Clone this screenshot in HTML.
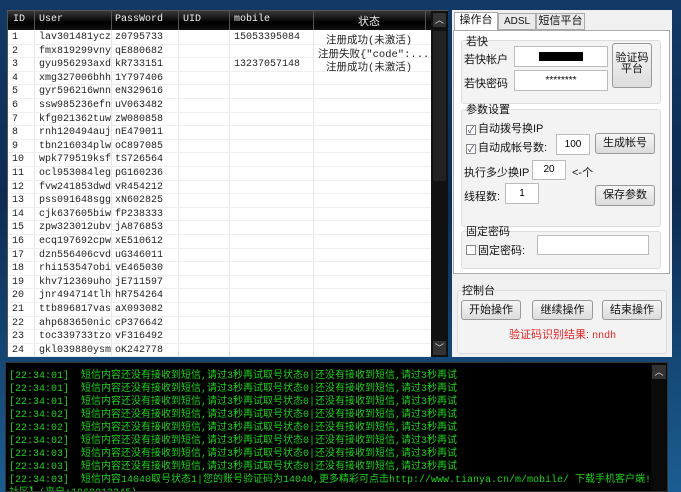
<!DOCTYPE html>
<html><head><meta charset="utf-8"><style>
*{margin:0;padding:0;box-sizing:border-box}
body{width:681px;height:492px;overflow:hidden;background:linear-gradient(180deg,#123a66,#0d2c52 40%,#1b5d92);font-family:"Liberation Sans","Noto Sans CJK SC",sans-serif;font-size:11px;position:relative}
.a{position:absolute}
#tbl{left:7px;top:10px;width:441px;height:347px;background:#fff;border:1px solid #555}
.hd{left:0;top:0;width:423px;height:19px;background:linear-gradient(#3a3a3a,#000 60%,#111);color:#eee;font-family:"Liberation Mono","Noto Sans CJK SC",monospace;font-size:10px}
.hd div{position:absolute;top:3px}
.vs{position:absolute;top:0;width:1px;height:19px;background:#555}
.row{position:absolute;left:0;width:423px;height:13.6px;border-bottom:1px solid #eee;font-family:"Liberation Mono","Noto Sans CJK SC",monospace;font-size:10px;color:#222}
.row span{position:absolute;top:1px;white-space:nowrap}
.cl{position:absolute;top:19px;width:1px;height:327px;background:#e6e6e6}
#sb{left:423px;top:0;width:17px;height:346px;background:#111}
#rp{left:452px;top:10px;width:220px;height:347px;background:#f0f0f0}
.tab{position:absolute;top:3px;height:17px;border:1px solid #aaa;background:#eaeaea;font-size:11px;text-align:center;line-height:15px;color:#111}
.grp{position:absolute;border:1px solid #ddd;border-radius:3px;background:#f3f3f3}
.lbl{position:absolute;font-size:11px;color:#111;white-space:nowrap}
.inp{position:absolute;background:#fff;border:1px solid #bbb;font-size:10px;text-align:center}
.btn{position:absolute;border:1px solid #999;border-radius:3px;background:linear-gradient(#f6f6f6,#dcdcdc);font-size:11px;text-align:center;color:#111}
.cb{display:inline-block;width:10px;height:10px;border:1px solid #888;background:#fff;vertical-align:-1px;margin-right:2px;font-size:9px;line-height:8px;color:#335;text-align:center}
#log{left:5px;top:362px;width:663px;height:130px;background:#000;border:1px solid #333;overflow:hidden}
.ln{position:absolute;left:3px;color:#1fd21f;font-size:10px;white-space:nowrap;font-family:"Liberation Mono","Noto Sans CJK SC",monospace}
</style></head><body>
<div id="tbl" class="a">
<div class="hd a">
<div style="left:5px">ID</div><div style="left:31px">User</div><div style="left:107px">PassWord</div><div style="left:175px">UID</div><div style="left:226px">mobile</div><div style="left:350px;font-size:11px;top:2px">状态</div>
<span class="vs" style="left:26px"></span><span class="vs" style="left:103px"></span><span class="vs" style="left:170px"></span><span class="vs" style="left:221px"></span><span class="vs" style="left:305px"></span><span class="vs" style="left:417px"></span>
</div>
<span class="cl" style="left:26px"></span><span class="cl" style="left:103px"></span><span class="cl" style="left:170px"></span><span class="cl" style="left:221px"></span><span class="cl" style="left:305px"></span>
<div id="rows"></div>
<div id="sb" class="a"><div style="position:absolute;left:2px;top:2px;width:13px;height:14px;background:#333;color:#ddd;font-size:9px;text-align:center">︿</div><div style="position:absolute;left:2px;top:20px;width:13px;height:150px;background:#222"></div><div style="position:absolute;left:2px;bottom:2px;width:13px;height:14px;background:#333;color:#ddd;font-size:9px;text-align:center">﹀</div></div>
</div>
<div id="rp" class="a">
<div class="tab" style="left:2px;top:2px;height:19px;width:44px;background:#fff;border-bottom:none">操作台</div>
<div class="tab" style="left:46px;width:38px;font-size:10px">ADSL</div>
<div class="tab" style="left:84px;width:49px">短信平台</div>
<div style="position:absolute;left:1px;top:20px;width:217px;height:244px;border:1px solid #aaa;background:#fff"></div>
<div class="grp" style="left:9px;top:30px;width:200px;height:64px"></div>
<div class="lbl" style="left:14px;top:23px">若快</div>
<div class="lbl" style="left:12px;top:41px">若快帐户</div>
<div class="inp" style="left:62px;top:36px;width:94px;height:21px"><div style="margin:5px auto;width:44px;height:9px;background:#000"></div></div>
<div class="lbl" style="left:12px;top:65px">若快密码</div>
<div class="inp" style="left:62px;top:60px;width:94px;height:21px;line-height:19px">********</div>
<div class="btn" style="left:160px;top:33px;width:40px;height:45px;padding-top:9px;line-height:11px">验证码<br>平台</div>
<div class="grp" style="left:9px;top:99px;width:200px;height:118px"></div>
<div class="lbl" style="left:14px;top:91px">参数设置</div>
<div class="lbl" style="left:14px;top:110px"><span class="cb">✓</span>自动拨号换IP</div>
<div class="lbl" style="left:14px;top:129px"><span class="cb">✓</span>自动成帐号数:</div>
<div class="inp" style="left:104px;top:124px;width:34px;height:21px;line-height:19px">100</div>
<div class="btn" style="left:143px;top:123px;width:60px;height:21px;line-height:19px">生成帐号</div>
<div class="lbl" style="left:12px;top:154px">执行多少换IP</div>
<div class="inp" style="left:80px;top:150px;width:34px;height:20px;line-height:18px">20</div>
<div class="lbl" style="left:120px;top:154px">&lt;-个</div>
<div class="lbl" style="left:12px;top:178px">线程数:</div>
<div class="inp" style="left:53px;top:173px;width:34px;height:21px;line-height:19px">1</div>
<div class="btn" style="left:143px;top:175px;width:60px;height:21px;line-height:19px">保存参数</div>
<div class="grp" style="left:9px;top:221px;width:200px;height:38px"></div>
<div class="lbl" style="left:14px;top:213px">固定密码</div>
<div class="lbl" style="left:14px;top:232px"><span class="cb"></span>固定密码:</div>
<div class="inp" style="left:85px;top:225px;width:112px;height:20px"></div>
<div class="grp" style="left:5px;top:280px;width:210px;height:64px"></div>
<div class="lbl" style="left:10px;top:272px">控制台</div>
<div class="btn" style="left:9px;top:290px;width:60px;height:20px;line-height:18px">开始操作</div>
<div class="btn" style="left:80px;top:290px;width:61px;height:20px;line-height:18px">继续操作</div>
<div class="btn" style="left:150px;top:290px;width:60px;height:20px;line-height:18px">结束操作</div>
<div class="lbl" style="left:57px;top:316px;color:#e22">验证码识别结果: <span style="font-family:'Liberation Mono',monospace;font-size:10px">nndh</span></div>
</div>
<div id="log" class="a">
<div id="lines"></div>
<div style="position:absolute;right:0;top:0;width:16px;height:128px;background:#0a0a0a"><div style="margin:2px 1px;height:14px;background:#333;color:#ddd;font-size:9px;text-align:center">︿</div></div>
</div>
<script>
var d=[["1","lav301481ycz","z0795733","15053395084","注册成功(未激活)"],["2","fmx819299vny","qE880682","","注册失败{\"code\":..."],["3","gyu956293axd","kR733151","13237057148","注册成功(未激活)"],["4","xmg327006bhh","1Y797406"],["5","gyr596216wnn","eN329616"],["6","ssw985236efn","uV063482"],["7","kfg021362tuw","zW080858"],["8","rnh120494auj","nE479011"],["9","tbn216034plw","oC897085"],["10","wpk779519ksf","tS726564"],["11","ocl953084leg","pG160236"],["12","fvw241853dwd","vR454212"],["13","pss091648sgg","xN602825"],["14","cjk637605biw","fP238333"],["15","zpw323012ubv","jA876853"],["16","ecq197692cpw","xE510612"],["17","dzn556406cvd","uG346011"],["18","rhi153547obi","vE465030"],["19","khv712369uho","jE711597"],["20","jnr494714tlh","hR754264"],["21","ttb896817vas","aX093082"],["22","ahp683650nic","cP376642"],["23","toc339733tzo","vF316492"],["24","gkl039880ysm","oK242778"]];
var h="";d.forEach(function(r,i){h+='<div class="row" style="top:'+(20+i*13.6)+'px"><span style="left:4px">'+r[0]+'</span><span style="left:31px">'+r[1]+'</span><span style="left:107px">'+r[2]+'</span>'+(r[3]?'<span style="left:226px">'+r[3]+'</span>':'')+(r[4]?'<span style="left:'+(i==1?310:318)+'px;font-size:10.5px">'+r[4]+'</span>':'')+'</div>';});
document.getElementById("rows").innerHTML=h;
var t=["01","01","01","02","02","02","03","03"],l="";
t.forEach(function(s,i){l+='<div class="ln" style="top:'+(3+i*13)+'px">[22:34:'+s+']&nbsp;&nbsp;短信内容还没有接收到短信,请过3秒再试取号状态0|还没有接收到短信,请过3秒再试</div>';});
l+='<div class="ln" style="top:107px">[22:34:03]&nbsp;&nbsp;短信内容14040取号状态1|您的账号验证码为14040,更多精彩可点击http://www.tianya.cn/m/mobile/ 下载手机客户端!【天涯</div><div class="ln" style="top:120px">社区】(来自:1069012345)</div>';
document.getElementById("lines").innerHTML=l;
</script>
</body></html>
